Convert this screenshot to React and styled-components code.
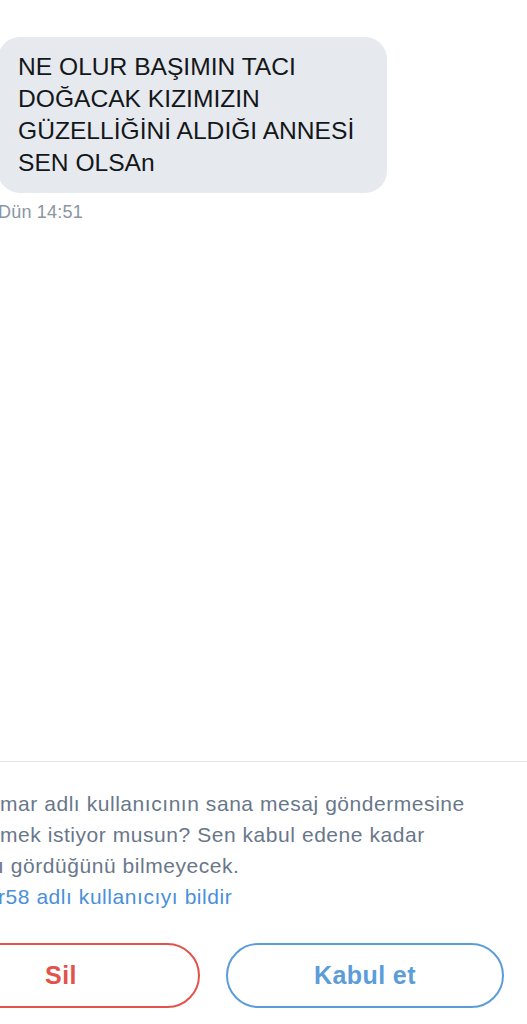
import React from "react";
import styled, { createGlobalStyle } from "styled-components";

const GlobalStyle = createGlobalStyle`
  html, body {
    margin: 0;
    padding: 0;
    background: #ffffff;
    overflow: hidden;
  }
  body {
    font-family: "Liberation Sans", Arial, sans-serif;
  }
`;

const Screen = styled.div`
  width: 527px;
  height: 1024px;
  display: flex;
  flex-direction: column;
  overflow: hidden;
  background: #ffffff;
`;

const Thread = styled.div`
  flex: 1;
  padding-top: 37px;
`;

const Bubble = styled.div`
  width: 389px;
  box-sizing: border-box;
  margin-left: -2px;
  padding: 14px 18px 14px 20px;
  background: #e6e9ee;
  border-radius: 22px;
  color: #14171a;
  font-size: 24.6px;
  line-height: 32px;
  white-space: nowrap;
`;

const Time = styled.div`
  margin: 9px 0 0 -2px;
  font-size: 18px;
  letter-spacing: 0.2px;
  color: #8a96a3;
`;

const Footer = styled.div`
  border-top: 1px solid #e3e5e8;
  height: 263px;
  box-sizing: border-box;
  padding-top: 26px;
`;

const Notice = styled.div`
  font-family: "Liberation Sans", Arial, sans-serif;
  font-size: 21px;
  letter-spacing: 0.55px;
  line-height: 31px;
`;

const Line = styled.div`
  white-space: nowrap;
  color: ${(p) => (p.$link ? "#4a90d9" : "#69778a")};
  margin-left: ${(p) => p.$shift || 0}px;
`;

const Actions = styled.div`
  display: flex;
  gap: 26px;
  margin: 31px 0 0 -78px;
`;

const Button = styled.button`
  width: 278px;
  height: 65px;
  flex: none;
  border-radius: 33px;
  background: #ffffff;
  border: 2px solid ${(p) => p.$color};
  color: ${(p) => p.$color};
  font-family: "Liberation Sans", Arial, sans-serif;
  font-weight: 700;
  font-size: 25px;
  letter-spacing: 0.4px;
  padding: 0;
`;

export default function App() {
  return (
    <>
      <GlobalStyle />
      <Screen>
        <Thread>
          <Bubble>
            NE OLUR BAŞIMIN TACI
            <br />
            DOĞACAK KIZIMIZIN
            <br />
            GÜZELLİĞİNİ ALDIĞI ANNESİ
            <br />
            SEN OLSAn
          </Bubble>
          <Time>Dün 14:51</Time>
        </Thread>
        <Footer>
          <Notice>
            <Line>mar adlı kullanıcının sana mesaj göndermesine</Line>
            <Line>mek istiyor musun? Sen kabul edene kadar</Line>
            <Line $shift={-2}>ı gördüğünü bilmeyecek.</Line>
            <Line $link $shift={-2}>r58 adlı kullanıcıyı bildir</Line>
          </Notice>
          <Actions>
            <Button $color="#e2544b">Sil</Button>
            <Button $color="#5b9ddb">Kabul et</Button>
          </Actions>
        </Footer>
      </Screen>
    </>
  );
}
